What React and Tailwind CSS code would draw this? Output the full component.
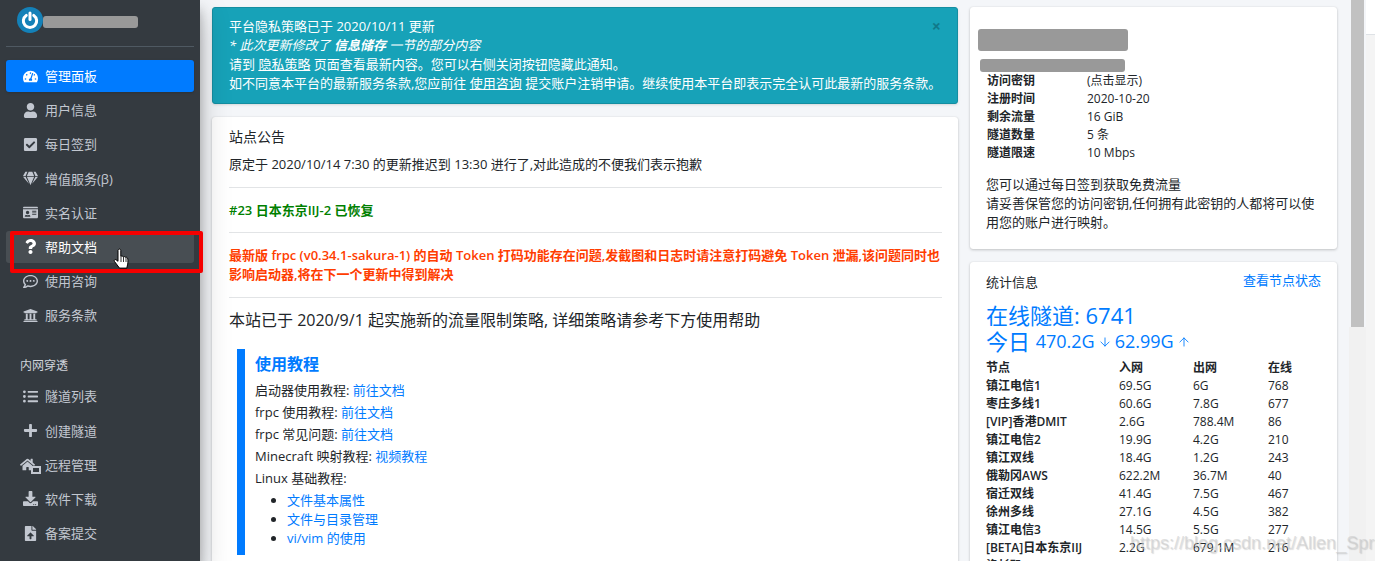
import React from "react";
import { FaTachometerAlt, FaUser, FaCheckSquare, FaGem, FaIdCard, FaQuestion, FaRegCommentDots, FaUniversity, FaListUl, FaPlus, FaDownload, FaFileUpload, FaHome } from "react-icons/fa";
import { ArrowDown, ArrowUp } from "lucide-react";

const font = { };

function HomeBox({ className }) {
  return (
    <span className="relative inline-block w-[17px] h-[14px]">
      <FaHome className="absolute left-[-2px] top-[-1px] w-[15px] h-[15px] text-[#c2c7d0]" />
      <span className="absolute right-[-2px] bottom-[-2px] w-[10px] h-[8px] border-2 border-[#c2c7d0] bg-[#343a40]" />
    </span>
  );
}

function NavItem({ Icon, label, active, hover, mt }) {
  const tone = active
    ? "bg-[#007bff] text-white shadow-sm"
    : hover
    ? "bg-[rgba(255,255,255,0.1)] text-white"
    : "text-[#c2c7d0]";
  return (
    <div className={`flex items-center h-[32px] rounded-[3px] ${tone} ${mt || "mt-[2.2px]"}`}>
      <span className="w-[39px] shrink-0 flex justify-center pl-[9px]">
        <Icon className="w-[15px] h-[15px]" />
      </span>
      <span className="text-[13px] leading-[20px]">{label}</span>
    </div>
  );
}

const infoRows = [
  ["访问密钥", "(点击显示)"],
  ["注册时间", "2020-10-20"],
  ["剩余流量", "16 GiB"],
  ["隧道数量", "5 条"],
  ["隧道限速", "10 Mbps"],
];

const nodes = [
  ["镇江电信1", "69.5G", "6G", "768"],
  ["枣庄多线1", "60.6G", "7.8G", "677"],
  ["[VIP]香港DMIT", "2.6G", "788.4M", "86"],
  ["镇江电信2", "19.9G", "4.2G", "210"],
  ["镇江双线", "18.4G", "1.2G", "243"],
  ["俄勒冈AWS", "622.2M", "36.7M", "40"],
  ["宿迁双线", "41.4G", "7.5G", "467"],
  ["徐州多线", "27.1G", "4.5G", "382"],
  ["镇江电信3", "14.5G", "5.5G", "277"],
  ["[BETA]日本东京IIJ", "2.2G", "679.1M", "216"],
  ["洛杉矶", "", "", ""],
];

export default function App() {
  return (
    <div className="relative flex h-[561px] w-[1375px] overflow-hidden bg-[#f4f6f9] text-[#212529] text-[13px] font-['Open_Sans','Noto_Sans_CJK_SC',sans-serif]">
      <aside className="w-[200px] shrink-0 bg-[#343a40] px-[6px] shadow-[0_14px_28px_rgba(0,0,0,0.25),0_10px_10px_rgba(0,0,0,0.22)] z-10">
        <div className="h-[47px] border-b border-[#4f5962] flex items-start pl-[11px] pt-[7px]">
          <span className="relative z-10 w-[26px] h-[26px] rounded-full bg-[#1481b8] flex items-center justify-center">
            <svg viewBox="0 0 24 24" className="w-[20px] h-[20px]" fill="none" stroke="white" strokeWidth="3.6" strokeLinecap="round">
              <path d="M7.5 6.5a8 8 0 1 0 9 0" />
              <path d="M12 3.5v8" />
            </svg>
          </span>
          <span className="mt-[9px] w-[95px] h-[12px] rounded-[3px] bg-[#999999]" />
        </div>
        <NavItem Icon={FaTachometerAlt} label="管理面板" active mt="mt-[13px]" />
        <NavItem Icon={FaUser} label="用户信息" />
        <NavItem Icon={FaCheckSquare} label="每日签到" />
        <NavItem Icon={FaGem} label="增值服务(β)" />
        <NavItem Icon={FaIdCard} label="实名认证" />
        <NavItem Icon={FaQuestion} label="帮助文档" hover />
        <NavItem Icon={FaRegCommentDots} label="使用咨询" />
        <NavItem Icon={FaUniversity} label="服务条款" />
        <div className="mt-[26px] pl-[14px] text-[12px] leading-[18px] text-[#d0d4db]">内网穿透</div>
        <NavItem Icon={FaListUl} label="隧道列表" mt="mt-[5px]" />
        <NavItem Icon={FaPlus} label="创建隧道" />
        <NavItem Icon={HomeBox} label="远程管理" />
        <NavItem Icon={FaDownload} label="软件下载" />
        <NavItem Icon={FaFileUpload} label="备案提交" />
      </aside>

      <main className="w-[746px] ml-[12px] shrink-0 pt-[7px]">
        <div className="relative h-[97px] rounded-[3px] border border-[#148ea1] bg-[#17a2b8] pl-[16px] pt-[9px] text-white leading-[19px] shadow-sm">
          <div>平台隐私策略已于 2020/10/11 更新</div>
          <div className="italic">* 此次更新修改了 <b>信息储存</b> 一节的部分内容</div>
          <div>请到 <u>隐私策略</u> 页面查看最新内容。您可以右侧关闭按钮隐藏此通知。</div>
          <div>如不同意本平台的最新服务条款,您应前往 <u>使用咨询</u> 提交账户注销申请。继续使用本平台即表示完全认可此最新的服务条款。</div>
          <span className="absolute right-[16px] top-[8px] text-[16px] leading-[20px] font-bold text-[#000000] opacity-25">×</span>
        </div>

        <section className="mt-[13px] h-[480px] rounded-[3px] bg-white pl-[17px] pr-[16px] pt-[10px] shadow-[0_0_1px_rgba(0,0,0,0.125),0_1px_3px_rgba(0,0,0,0.2)]">
          <div className="text-[14px] leading-[20px]">站点公告</div>
          <div className="mt-[7px] leading-[20px]">原定于 2020/10/14 7:30 的更新推迟到 13:30 进行了,对此造成的不便我们表示抱歉</div>
          <div className="mt-[13px] h-px bg-[#e2e4e6]" />
          <div className="mt-[12px] leading-[20px] font-semibold text-[#008000]">#23 日本东京IIJ-2 已恢复</div>
          <div className="mt-[12px] h-px bg-[#e2e4e6]" />
          <div className="mt-[13px] leading-[19px] font-semibold text-[#ff3d00]">最新版 frpc (v0.34.1-sakura-1) 的自动 Token 打码功能存在问题,发截图和日志时请注意打码避免 Token 泄漏,该问题同时也影响启动器,将在下一个更新中得到解决</div>
          <div className="mt-[13px] h-px bg-[#e2e4e6]" />
          <div className="mt-[10px] text-[16px] leading-[24px]">本站已于 2020/9/1 起实施新的流量限制策略, 详细策略请参考下方使用帮助</div>
          <div className="mt-[17px] ml-[8px] h-[206px] border-l-[8px] border-[#007bff] pl-[10px] pt-[3px]">
            <div className="text-[16px] leading-[24px] font-bold text-[#007bff]">使用教程</div>
            <div className="mt-[3px] leading-[22px]">启动器使用教程: <span className="text-[#007bff]">前往文档</span></div>
            <div className="leading-[22px]">frpc 使用教程: <span className="text-[#007bff]">前往文档</span></div>
            <div className="leading-[22px]">frpc 常见问题: <span className="text-[#007bff]">前往文档</span></div>
            <div className="leading-[22px]">Minecraft 映射教程: <span className="text-[#007bff]">视频教程</span></div>
            <div className="leading-[22px]">Linux 基础教程:</div>
            <ul className="mt-[2px] list-disc pl-[32px] leading-[19px] text-[#007bff] marker:text-[#212529]">
              <li>文件基本属性</li>
              <li>文件与目录管理</li>
              <li>vi/vim 的使用</li>
            </ul>
          </div>
        </section>
      </main>

      <div className="w-[367px] ml-[12px] shrink-0 pt-[7px]">
        <section className="h-[242px] rounded-[3px] bg-white pt-[22px] shadow-[0_0_1px_rgba(0,0,0,0.125),0_1px_3px_rgba(0,0,0,0.2)]">
          <div className="ml-[8px] w-[150px] h-[22px] rounded-[3px] bg-[#999999]" />
          <div className="mt-[8px] ml-[10px] w-[145px] h-[13px] rounded-[3px] bg-[#999999]" />
          <div className="mt-[0px] ml-[17px] grid grid-cols-[100px_1fr] text-[12px] leading-[18px]">
            {infoRows.map(([k, v]) => (
              <React.Fragment key={k}>
                <div className="font-semibold">{k}</div>
                <div>{v}</div>
              </React.Fragment>
            ))}
          </div>
          <div className="mt-[13px] mx-[16px] leading-[19px]">
            您可以通过每日签到获取免费流量<br />
            请妥善保管您的访问密钥,任何拥有此密钥的人都将可以使用您的账户进行映射。
          </div>
        </section>

        <section className="mt-[13px] h-[320px] rounded-[3px] bg-white pl-[16px] pr-[16px] pt-[10px] shadow-[0_0_1px_rgba(0,0,0,0.125),0_1px_3px_rgba(0,0,0,0.2)]">
          <div className="flex justify-between items-start">
            <span className="text-[13px] leading-[20px]">统计信息</span>
            <span className="text-[13px] leading-[16px] text-[#007bff]">查看节点状态</span>
          </div>
          <div className="mt-[10px] text-[22px] leading-[26px] text-[#007bff]">在线隧道: 6741</div>
          <div className="text-[#007bff] leading-[26px] text-[22px] flex items-center">
            <span>今日&nbsp;</span>
            <span className="text-[18px]">470.2G</span>
            <ArrowDown className="w-[14px] h-[14px] mx-[3px] mt-[2px]" strokeWidth={1.5} />
            <span className="text-[18px]">62.99G</span>
            <ArrowUp className="w-[14px] h-[14px] ml-[3px] mt-[2px]" strokeWidth={1.5} />
          </div>
          <div className="mt-[5px] grid grid-cols-[133px_74px_75px_1fr] text-[12px] leading-[18px]">
            <div className="font-semibold">节点</div>
            <div className="font-semibold">入网</div>
            <div className="font-semibold">出网</div>
            <div className="font-semibold">在线</div>
            {nodes.map((r) => (
              <React.Fragment key={r[0]}>
                <div className="font-semibold whitespace-nowrap">{r[0]}</div>
                <div>{r[1]}</div>
                <div>{r[2]}</div>
                <div>{r[3]}</div>
              </React.Fragment>
            ))}
          </div>
        </section>
      </div>

      <div className="ml-[12px] w-[17px] shrink-0 h-full flex flex-col items-center">
        <div className="w-[13px] h-[327px] shrink-0 bg-[#c1c1c1]" />
        <div className="w-full flex-1 bg-[#f1f1f1]" />
      </div>
      <div className="flex-1 flex flex-col">
        <div className="h-[35px] bg-white border-b border-[#dee2e6]" />
        <div className="flex-1 bg-[#f4f4f4]" />
      </div>

      {/* red highlight annotation */}
      <div className="absolute z-20 left-[10px] top-[231px] w-[193px] h-[42px] border-[4px] border-[#f50000] rounded-[2px]" />
      {/* mouse cursor */}
      <svg viewBox="0 0 18 22" className="absolute z-30 left-[113px] top-[248px] w-[18px] h-[22px]" fill="white" stroke="black" strokeWidth="1" strokeLinejoin="round">
        <path d="M5.5 1.5c.9-.9 2.3-.4 2.3 1v6l1-.5c.8 0 1.3.3 1.5.8.9-.4 1.7-.2 2 .5.9-.3 1.8 0 2.2.8.6 1 .5 4 .2 6l-.9 4H6.5L1.5 13.5c-.9-1.2.3-2.5 1.5-1.8l2 1.6V2.5c0-.4.2-.8.5-1z" />
        <path d="M8 9v5M10.5 9v5M13 10v4" fill="none" strokeWidth="0.8" />
      </svg>
      {/* watermark */}
      <div className="absolute z-30 left-[1130px] top-[531px] whitespace-nowrap text-[18px] leading-[24px] text-[rgba(200,200,200,0.55)] font-['Liberation_Sans',sans-serif] [text-shadow:1px_1px_1px_rgba(120,120,120,0.25)]">
        https://blog.csdn.net/Allen_Spring
      </div>
    </div>
  );
}
